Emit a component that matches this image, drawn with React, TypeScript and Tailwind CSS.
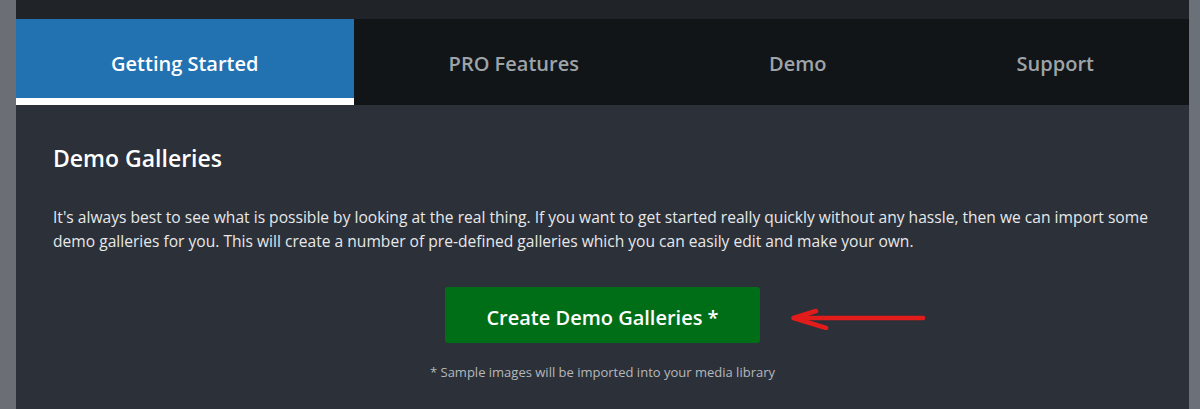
import React from "react";

const tabs = [
  { label: "Getting Started", active: true },
  { label: "PRO Features", active: false },
  { label: "Demo", active: false },
  { label: "Support", active: false },
];

function RedArrow() {
  return (
    <svg
      className="pointer-events-none absolute left-[calc(100%+30px)] top-[19px]"
      width="136"
      height="24"
      viewBox="0 0 136 24"
      fill="none"
      stroke="#e21b1b"
      strokeWidth="4.5"
      strokeLinecap="round"
      strokeLinejoin="round"
    >
      <path d="M133 12H4" />
      <path d="M26 5L3.5 12L36 22" />
    </svg>
  );
}

export default function App() {
  return (
    <div
      className="flex h-[409px] w-[1200px] overflow-hidden bg-[#2c3038]"
      style={{ fontFamily: '"Open Sans", "Noto Sans", sans-serif' }}
    >
      {/* left admin strip */}
      <div className="w-4 shrink-0 bg-[#6b6e74]" />

      <div className="flex min-w-0 flex-1 flex-col">
        <div className="h-[19px] bg-[#202327]" />

        {/* Tabs */}
        <nav className="flex h-[86px] bg-[#111518]">
          {tabs.map((tab) => (
            <div
              key={tab.label}
              className={
                tab.active
                  ? "flex flex-auto items-center justify-center bg-[#2271b1] pt-[4px] text-[20px] font-semibold text-white shadow-[inset_0_-7px_0_#ffffff]"
                  : "flex flex-auto items-center justify-center pt-[4px] text-[20px] font-semibold text-[#9ea3a8]"
              }
            >
              {tab.label}
            </div>
          ))}
        </nav>

        {/* Content */}
        <div className="flex flex-col px-[37px] pt-[38px]">
          <h2 className="text-[23px] leading-[30px] font-semibold text-white">
            Demo Galleries
          </h2>
          <p className="mt-[32px] text-[15.6px] leading-[24px] text-[#e6e8ea]">
            It's always best to see what is possible by looking at the real
            thing. If you want to get started really quickly without any hassle,
            then we can import some
            <br />
            demo galleries for you. This will create a number of pre-defined
            galleries which you can easily edit and make your own.
          </p>

          <div className="mt-[34px] flex justify-center">
            <div className="relative">
              <button className="h-[56px] w-[315px] rounded-[3px] bg-[#006e17] pt-[5px] text-[20px] font-semibold text-white">
                Create Demo Galleries *
              </button>
              <RedArrow />
            </div>
          </div>

          <p className="mt-[19px] text-center text-[13px] leading-[20px] text-[#b4b8bc]">
            * Sample images will be imported into your media library
          </p>
        </div>
      </div>

      {/* right scrollbar strip */}
      <div className="w-[11px] shrink-0 bg-[#6c7078]" />
    </div>
  );
}
